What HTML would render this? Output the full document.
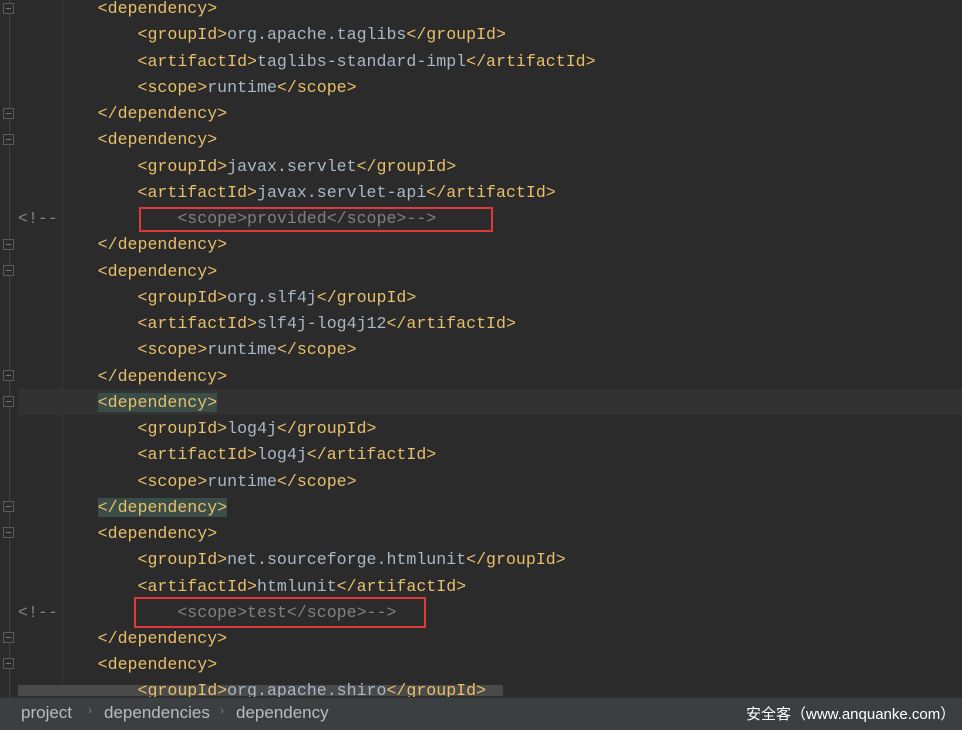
<!DOCTYPE html><html><head><meta charset="utf-8"><style>
body{margin:0;width:962px;height:729px;background:#2b2b2b;overflow:hidden;position:relative;font-family:"Liberation Mono",monospace}
.l{position:absolute;left:18px;height:26px;line-height:26px;font-size:16.6px;white-space:pre;color:#a9b7c6;margin-top:1px}
.t{color:#e8bf6a}.c{color:#808080}
.h{background:#3a4d46}
.g{position:absolute;left:9px;top:0;width:1px;height:697px;background:#3f3f3f}
.ig{position:absolute;width:1px;background:#393939}
.f{position:absolute;left:3px;width:11px;height:11px;border:1px solid #5a5a5a;box-sizing:border-box;background:#2b2b2b}
.f:after{content:"";position:absolute;left:2px;top:4px;width:5px;height:1px;background:#777}
.box{position:absolute;border:2px solid #e0393c}
.sb{position:absolute;left:0;top:697px;width:962px;height:32px;background:#3c3f41;border-top:1px solid #323232;font-family:"Liberation Sans",sans-serif;font-size:17px;color:#bbbbbb}
</style></head><body>
<div class="g"></div>
<div class="ig" style="left:62px;top:0;height:697px"></div>
<div style="position:absolute;left:18px;top:389px;width:944px;height:26px;background:#323232"></div>
<div style="position:absolute;left:18px;top:685px;width:485px;height:11px;background:#4a4a4a"></div>
<div class="f" style="top:3px"></div><div class="f" style="top:108px"></div><div class="f" style="top:134px"></div><div class="f" style="top:239px"></div><div class="f" style="top:265px"></div><div class="f" style="top:370px"></div><div class="f" style="top:396px"></div><div class="f" style="top:501px"></div><div class="f" style="top:527px"></div><div class="f" style="top:632px"></div><div class="f" style="top:658px"></div>
<div class="l" style="top:-5px">        <span class="t">&lt;dependency&gt;</span></div>
<div class="l" style="top:21px">            <span class="t">&lt;groupId&gt;</span>org.apache.taglibs<span class="t">&lt;/groupId&gt;</span></div>
<div class="l" style="top:48px">            <span class="t">&lt;artifactId&gt;</span>taglibs-standard-impl<span class="t">&lt;/artifactId&gt;</span></div>
<div class="l" style="top:74px">            <span class="t">&lt;scope&gt;</span>runtime<span class="t">&lt;/scope&gt;</span></div>
<div class="l" style="top:100px">        <span class="t">&lt;/dependency&gt;</span></div>
<div class="l" style="top:126px">        <span class="t">&lt;dependency&gt;</span></div>
<div class="l" style="top:153px">            <span class="t">&lt;groupId&gt;</span>javax.servlet<span class="t">&lt;/groupId&gt;</span></div>
<div class="l" style="top:179px">            <span class="t">&lt;artifactId&gt;</span>javax.servlet-api<span class="t">&lt;/artifactId&gt;</span></div>
<div class="l c" style="top:205px">&lt;!--            &lt;scope&gt;provided&lt;/scope&gt;--&gt;</div>
<div class="l" style="top:231px">        <span class="t">&lt;/dependency&gt;</span></div>
<div class="l" style="top:258px">        <span class="t">&lt;dependency&gt;</span></div>
<div class="l" style="top:284px">            <span class="t">&lt;groupId&gt;</span>org.slf4j<span class="t">&lt;/groupId&gt;</span></div>
<div class="l" style="top:310px">            <span class="t">&lt;artifactId&gt;</span>slf4j-log4j12<span class="t">&lt;/artifactId&gt;</span></div>
<div class="l" style="top:336px">            <span class="t">&lt;scope&gt;</span>runtime<span class="t">&lt;/scope&gt;</span></div>
<div class="l" style="top:363px">        <span class="t">&lt;/dependency&gt;</span></div>
<div class="l" style="top:389px">        <span class="t h">&lt;dependency&gt;</span></div>
<div class="l" style="top:415px">            <span class="t">&lt;groupId&gt;</span>log4j<span class="t">&lt;/groupId&gt;</span></div>
<div class="l" style="top:441px">            <span class="t">&lt;artifactId&gt;</span>log4j<span class="t">&lt;/artifactId&gt;</span></div>
<div class="l" style="top:468px">            <span class="t">&lt;scope&gt;</span>runtime<span class="t">&lt;/scope&gt;</span></div>
<div class="l" style="top:494px">        <span class="t h">&lt;/dependency&gt;</span></div>
<div class="l" style="top:520px">        <span class="t">&lt;dependency&gt;</span></div>
<div class="l" style="top:546px">            <span class="t">&lt;groupId&gt;</span>net.sourceforge.htmlunit<span class="t">&lt;/groupId&gt;</span></div>
<div class="l" style="top:573px">            <span class="t">&lt;artifactId&gt;</span>htmlunit<span class="t">&lt;/artifactId&gt;</span></div>
<div class="l c" style="top:599px">&lt;!--            &lt;scope&gt;test&lt;/scope&gt;--&gt;</div>
<div class="l" style="top:625px">        <span class="t">&lt;/dependency&gt;</span></div>
<div class="l" style="top:651px">        <span class="t">&lt;dependency&gt;</span></div>
<div class="l" style="top:677px">            <span class="t">&lt;groupId&gt;</span>org.apache.shiro<span class="t">&lt;/groupId&gt;</span></div>
<div class="box" style="left:139px;top:207px;width:350px;height:21px"></div>
<div class="box" style="left:134px;top:597px;width:288px;height:27px"></div>
<div class="sb"><span style="position:absolute;left:21px;top:5px">project</span><span style="position:absolute;left:88px;top:5px;color:#777;font-size:12px">›</span><span style="position:absolute;left:104px;top:5px">dependencies</span><span style="position:absolute;left:220px;top:5px;color:#777;font-size:12px">›</span><span style="position:absolute;left:236px;top:5px">dependency</span><span style="position:absolute;left:746px;top:5px;color:#fff;font-size:15px;font-family:'Liberation Sans','Noto Sans CJK SC',sans-serif">安全客（www.anquanke.com）</span></div>
</body></html>
